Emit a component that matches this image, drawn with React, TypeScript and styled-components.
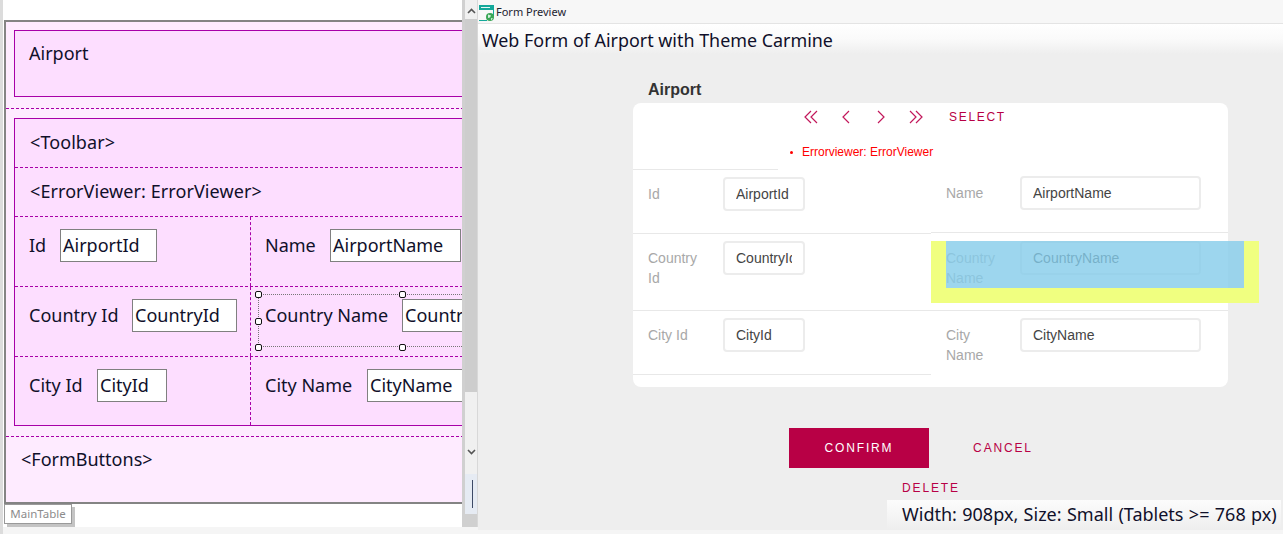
import React from "react";
import styled, { createGlobalStyle } from "styled-components";

const Global = createGlobalStyle`
  html, body { margin: 0; padding: 0; background: #f5f5f5; }
  * { box-sizing: border-box; }
`;

const Page = styled.div`
  display: flex;
  width: 1283px;
  height: 534px;
  overflow: hidden;
`;

/* ---------- designer ---------- */
const Designer = styled.div`
  width: 462px;
  height: 534px;
  flex: none;
  overflow: hidden;
  display: flex;
  flex-direction: column;
  background: #fff;
  border-left: 3px solid #dcdcdc;
  padding: 20px 0 0 1px;
  font-family: "Noto Sans", sans-serif;
  color: #10102a;
`;
const Frame = styled.div`
  width: 600px;
  height: 484px;
  flex: none;
  border: 2px solid #848484;
  border-right: none;
  background: #feebff;
  padding-top: 8px;
`;
const DesignTable = styled.div`
  margin-left: 8px;
  border: 1.5px solid #a800a8;
  background: #fddeff;
  height: ${(p: { $height: number }) => p.$height}px;
`;
const TitleCell = styled.div`
  padding: 9px 0 0 14px;
  font-size: 18px;
  line-height: 26px;
`;
const DashedRule = styled.div`
  border-top: 1.5px dashed #a800a8;
  margin-top: ${(p: { $top: number; $bottom: number }) => p.$top}px;
  margin-bottom: ${(p: { $top: number; $bottom: number }) => p.$bottom}px;
`;
const BandCell = styled.div`
  height: 49px;
  padding: 10px 0 0 15px;
  font-size: 18px;
  line-height: 26px;
  letter-spacing: 0.08px;
  border-bottom: 1.5px dashed #a800a8;
`;
const FieldRow = styled.div<{ $height: number; $last?: boolean }>`
  display: grid;
  grid-template-columns: 235px 1fr;
  height: ${(p) => p.$height}px;
  border-bottom: ${(p) => (p.$last ? "none" : "1.5px dashed #a800a8")};
`;
const FieldCell = styled.div<{ $second?: boolean }>`
  position: relative;
  display: flex;
  align-items: flex-start;
  padding: 12px 0 0 14px;
  border-left: ${(p) => (p.$second ? "1.5px dashed #a800a8" : "none")};
`;
const FieldLabel = styled.span<{ $width: number }>`
  width: ${(p) => p.$width}px;
  flex: none;
  font-size: 18px;
  line-height: 33px;
  white-space: nowrap;
`;
const FieldBox = styled.span<{ $width: number }>`
  width: ${(p) => p.$width}px;
  height: 33px;
  flex: none;
  padding-left: 2px;
  background: #fff;
  border: 1.5px solid #808080;
  font-size: 18px;
  line-height: 30px;
  white-space: nowrap;
  overflow: hidden;
`;
const Selection = styled.div`
  position: absolute;
  left: 7px;
  top: 7px;
  width: 400px;
  height: 53px;
  border: 1px dotted #777;
  pointer-events: none;
`;
const Handle = styled.i<{ $x: number; $y: number }>`
  position: absolute;
  left: ${(p) => p.$x - 3}px;
  top: ${(p) => p.$y - 3}px;
  width: 7px;
  height: 7px;
  background: #fff;
  border: 1.5px solid #111;
  border-radius: 2px;
`;
const FormButtonsCell = styled.div`
  padding: 9px 0 0 15px;
  font-size: 18px;
  line-height: 26px;
`;
const TabLabel = styled.div`
  width: 68px;
  height: 20px;
  flex: none;
  margin-top: 0;
  border: 1px solid #9a9a9a;
  background: #fff;
  box-shadow: 3px 3px 0 #c4c4c4;
  color: #8c8c8c;
  font-size: 11.5px;
  line-height: 18px;
  text-align: center;
`;
const BottomStrip = styled.div`
  height: 7px;
  margin: auto 0 0 -1px;
  background: #f5f5f5;
`;

/* ---------- scrollbar ---------- */
const Scrollbar = styled.div`
  width: 16px;
  height: 527px;
  flex: none;
  display: flex;
  flex-direction: column;
  background: #f0f0f0;
  border-left: 3px solid #d0d0d0;
  border-right: 1px solid #d8d8d8;
  color: #555;
`;
const ArrowCap = styled.div`
  height: 19px;
  flex: none;
  display: flex;
  align-items: center;
  justify-content: center;
  padding-top: 3px;
  background: #f0f0f0;
`;
const Thumb = styled.div`
  height: 373px;
  flex: none;
  background: #cdcdcd;
`;
const TrackGap = styled.div`
  height: 82px;
  flex: none;
  display: flex;
  align-items: flex-end;
  justify-content: center;
  padding-bottom: 19px;
`;
const MiniPane = styled.div`
  height: 40px;
  flex: none;
  display: flex;
  justify-content: center;
  padding-top: 6px;
  background: #e6ebf3;
`;
const MiniBar = styled.div`
  width: 1px;
  height: 28px;
  margin-left: 2px;
  background: #3d4a66;
`;
const TrackEnd = styled.div`
  flex: 1;
  background: #d0d0d0;
`;

/* ---------- preview ---------- */
const Preview = styled.div`
  flex: 1;
  min-width: 0;
  display: flex;
  flex-direction: column;
  height: 534px;
`;
const TitleBar = styled.div`
  height: 24px;
  flex: none;
  display: flex;
  align-items: center;
  gap: 1px;
  padding: 0 0 1px 1px;
  background: #f7f7f7;
  border-bottom: 1px solid #e4e4e4;
  font-family: "Noto Sans", sans-serif;
  font-size: 11px;
  color: #1d2330;
`;
const Heading = styled.div`
  height: 30px;
  flex: none;
  padding-left: 4px;
  background: linear-gradient(#fff 0%, #fafafa 50%, #eee 100%);
  font-family: "Noto Sans", sans-serif;
  font-size: 17.9px;
  line-height: 32px;
  color: #10102a;
  white-space: nowrap;
`;
const Stage = styled.div`
  position: relative;
  height: 476px;
  flex: none;
  padding: 24px 0 0 155px;
  background: #eee;
  font-family: "Liberation Sans", Arial, sans-serif;
`;
const FormWrap = styled.div`
  width: 595px;
`;
const FormTitle = styled.div`
  padding-left: 15px;
  height: 25px;
  font-size: 16px;
  font-weight: 700;
  line-height: 24px;
  color: #333;
`;
const Card = styled.div`
  height: 284px;
  border-radius: 8px;
  background: #fff;
`;
const Toolbar = styled.div`
  display: flex;
  align-items: center;
  height: 28px;
  padding-left: 160px;
  color: #c2185b;
`;
const NavButton = styled.span`
  width: 35px;
  display: flex;
  justify-content: center;
`;
const SelectAction = styled.span`
  margin-left: 16px;
  font-size: 12px;
  letter-spacing: 1.7px;
  color: #b80045;
`;
const ErrorRow = styled.div`
  height: 38px;
  padding: 13px 0 0 157px;
  font-size: 12px;
  line-height: 16px;
  color: #f00;
  white-space: nowrap;
  display: flex;
  gap: 9px;
`;
const Bullet = styled.span`
  width: 3px;
  height: 3px;
  margin-top: 7px;
  border-radius: 50%;
  background: #f00;
`;
const ShortRule = styled.div`
  width: 145px;
  border-top: 1px solid #e8e8e8;
  height: 1px;
`;
const Columns = styled.div`
  display: grid;
  grid-template-columns: 298px 297px;
`;
const FormRow = styled.div<{ $height: number; $top: number; $ruled?: boolean }>`
  position: relative;
  display: flex;
  align-items: flex-start;
  height: ${(p) => p.$height}px;
  padding: ${(p) => p.$top}px 0 0 15px;
  border-bottom: ${(p) => (p.$ruled ? "1px solid #e8e8e8" : "none")};
`;
const FormLabel = styled.label<{ $width: number }>`
  width: ${(p) => p.$width}px;
  flex: none;
  padding-top: 7px;
  padding-right: 12px;
  font-size: 14px;
  line-height: 20px;
  color: #a8a8a8;
`;
const FormInput = styled.input<{ $width: number }>`
  width: ${(p) => p.$width}px;
  height: 34px;
  flex: none;
  padding: 0 11px;
  border: 2px solid #ececec;
  border-radius: 4px;
  background: #fff;
  font-family: inherit;
  font-size: 14px;
  color: #444;
  outline: none;
`;
const MarginBox = styled.div`
  position: absolute;
  left: 0;
  top: 8px;
  width: 328px;
  height: 62px;
  border: solid #f0ff80;
  border-width: 0 15px 15px;
`;
const ContentBox = styled.div`
  position: absolute;
  left: 15px;
  top: 8px;
  width: 298px;
  height: 47px;
  background: rgba(132, 204, 234, 0.8);
`;
const Actions = styled.div`
  width: 290px;
  margin: 41px auto 0;
  display: flex;
  flex-wrap: wrap;
  justify-content: center;
  gap: 0 4px;
`;
const ActionButton = styled.div<{ $primary?: boolean }>`
  width: 140px;
  height: 40px;
  flex: none;
  padding-left: 1px;
  text-align: center;
  font-size: 12px;
  line-height: 40px;
  letter-spacing: 1.85px;
  background: ${(p) => (p.$primary ? "#b80045" : "transparent")};
  color: ${(p) => (p.$primary ? "#fff" : "#b80045")};
`;
const SizeBar = styled.div`
  position: absolute;
  right: 2px;
  bottom: 0;
  width: 394px;
  height: 30px;
  padding-left: 15px;
  background: linear-gradient(#fcfcfc, #eee);
  font-family: "Noto Sans", sans-serif;
  font-size: 18px;
  word-spacing: 0.7px;
  line-height: 29px;
  color: #10102a;
  white-space: nowrap;
`;
const Footer = styled.div`
  flex: 1;
  background: #f5f5f5;
`;

const Chevron = ({ points, w }: { points: string[]; w: number }) => (
  <svg width={w} height="14" viewBox={`0 0 ${w} 14`} fill="none" stroke="currentColor" strokeWidth="1.2">
    {points.map((p) => (
      <polyline key={p} points={p} />
    ))}
  </svg>
);

const PreviewIcon = () => (
  <svg width="16" height="19" viewBox="0 0 16 19">
    <rect x="0" y="3" width="15" height="5" fill="#14a89a" />
    <rect x="2" y="5" width="9" height="1" fill="#e8f8f6" />
    <rect x="14" y="3" width="1" height="11" fill="#14a89a" />
    <rect x="0" y="18" width="8" height="1" fill="#14a89a" />
    <circle cx="11" cy="15" r="4" fill="#3aa655" />
    <path d="M9 12.5l3 1-1 2-2 .5zM12 16l2 .5-2 2z" fill="#d4f0e0" />
  </svg>
);

const App = () => (
  <>
    <Global />
    <Page>
      <Designer>
        <Frame>
          <DesignTable $height={67}>
            <TitleCell>Airport</TitleCell>
          </DesignTable>
          <DashedRule $top={11} $bottom={9} />
          <DesignTable $height={308}>
            <BandCell>&lt;Toolbar&gt;</BandCell>
            <BandCell>&lt;ErrorViewer: ErrorViewer&gt;</BandCell>
            <FieldRow $height={70}>
              <FieldCell>
                <FieldLabel $width={31}>Id</FieldLabel>
                <FieldBox $width={97}>AirportId</FieldBox>
              </FieldCell>
              <FieldCell $second>
                <FieldLabel $width={65}>Name</FieldLabel>
                <FieldBox $width={131}>AirportName</FieldBox>
              </FieldCell>
            </FieldRow>
            <FieldRow $height={70}>
              <FieldCell>
                <FieldLabel $width={103}>Country Id</FieldLabel>
                <FieldBox $width={105}>CountryId</FieldBox>
              </FieldCell>
              <FieldCell $second>
                <FieldLabel $width={137}>Country Name</FieldLabel>
                <FieldBox $width={140}>CountryName</FieldBox>
                <Selection>
                  <Handle $x={-1} $y={-1} />
                  <Handle $x={143} $y={-1} />
                  <Handle $x={-1} $y={26} />
                  <Handle $x={-1} $y={52} />
                  <Handle $x={143} $y={52} />
                </Selection>
              </FieldCell>
            </FieldRow>
            <FieldRow $height={68} $last>
              <FieldCell>
                <FieldLabel $width={68}>City Id</FieldLabel>
                <FieldBox $width={70}>CityId</FieldBox>
              </FieldCell>
              <FieldCell $second>
                <FieldLabel $width={102}>City Name</FieldLabel>
                <FieldBox $width={140}>CityName</FieldBox>
              </FieldCell>
            </FieldRow>
          </DesignTable>
          <DashedRule $top={10} $bottom={0} />
          <FormButtonsCell>&lt;FormButtons&gt;</FormButtonsCell>
        </Frame>
        <TabLabel>MainTable</TabLabel>
        <BottomStrip />
      </Designer>

      <Scrollbar>
        <ArrowCap>
          <svg width="9" height="6" viewBox="0 0 9 6" fill="none" stroke="currentColor" strokeWidth="1.6">
            <polyline points="1,5 4.5,1.5 8,5" />
          </svg>
        </ArrowCap>
        <Thumb />
        <TrackGap>
          <svg width="9" height="6" viewBox="0 0 9 6" fill="none" stroke="currentColor" strokeWidth="1.6">
            <polyline points="1,1 4.5,4.5 8,1" />
          </svg>
        </TrackGap>
        <MiniPane>
          <MiniBar />
        </MiniPane>
        <TrackEnd />
      </Scrollbar>

      <Preview>
        <TitleBar>
          <PreviewIcon />
          Form Preview
        </TitleBar>
        <Heading>Web Form of Airport with Theme Carmine</Heading>
        <Stage>
          <FormWrap>
            <FormTitle>Airport</FormTitle>
            <Card>
              <Toolbar>
                <NavButton>
                  <Chevron w={14} points={["7,1 1,7 7,13", "13,1 7,7 13,13"]} />
                </NavButton>
                <NavButton>
                  <Chevron w={8} points={["7,1 1,7 7,13"]} />
                </NavButton>
                <NavButton>
                  <Chevron w={8} points={["1,1 7,7 1,13"]} />
                </NavButton>
                <NavButton>
                  <Chevron w={14} points={["1,1 7,7 1,13", "7,1 13,7 7,13"]} />
                </NavButton>
                <SelectAction>SELECT</SelectAction>
              </Toolbar>
              <ErrorRow>
                <Bullet />
                Errorviewer: ErrorViewer
              </ErrorRow>
              <ShortRule />
              <Columns>
                <div>
                  <FormRow $height={64} $top={7} $ruled>
                    <FormLabel $width={75}>Id</FormLabel>
                    <FormInput $width={82} readOnly value="AirportId" />
                  </FormRow>
                  <FormRow $height={77} $top={7} $ruled>
                    <FormLabel $width={75}>Country Id</FormLabel>
                    <FormInput $width={82} readOnly value="CountryId" />
                  </FormRow>
                  <FormRow $height={64} $top={7} $ruled>
                    <FormLabel $width={75}>City Id</FormLabel>
                    <FormInput $width={82} readOnly value="CityId" />
                  </FormRow>
                </div>
                <div>
                  <FormRow $height={63} $top={6} $ruled>
                    <FormLabel $width={74}>Name</FormLabel>
                    <FormInput $width={181} readOnly value="AirportName" />
                  </FormRow>
                  <FormRow $height={78} $top={8} $ruled>
                    <FormLabel $width={74}>Country Name</FormLabel>
                    <FormInput $width={181} readOnly value="CountryName" />
                    <MarginBox />
                    <ContentBox />
                  </FormRow>
                  <FormRow $height={64} $top={7}>
                    <FormLabel $width={74}>City Name</FormLabel>
                    <FormInput $width={181} readOnly value="CityName" />
                  </FormRow>
                </div>
              </Columns>
            </Card>
            <Actions>
              <ActionButton $primary>CONFIRM</ActionButton>
              <ActionButton>CANCEL</ActionButton>
              <ActionButton>DELETE</ActionButton>
            </Actions>
          </FormWrap>
          <SizeBar>Width: 908px, Size: Small (Tablets &gt;= 768 px)</SizeBar>
        </Stage>
        <Footer />
      </Preview>
    </Page>
  </>
);

export default App;
